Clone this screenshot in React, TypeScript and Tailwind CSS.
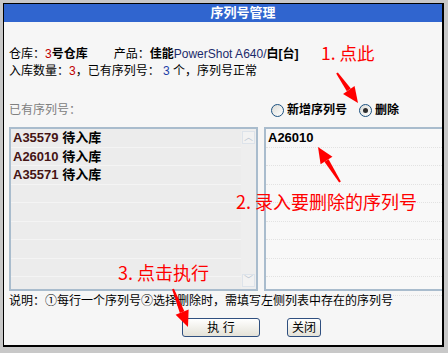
const font = "font-['Liberation_Sans','Noto_Sans_CJK_SC',sans-serif]";
const handFont = "font-['Noto_Sans_CJK_SC',sans-serif]";

const leftItems = ["A35579", "A26010", "A35571"];

const Radio = ({ checked, label }: { checked?: boolean; label: string }) => (
  <label className="flex items-center gap-[3px]">
    <span className="w-[13px] h-[13px] rounded-full border border-[#1c5180] bg-gradient-to-br from-[#dcdcd7] to-white flex items-center justify-center">
      {checked && <span className="w-[5px] h-[5px] rounded-full bg-[#2e2e2e]" />}
    </span>
    <span className="font-bold">{label}</span>
  </label>
);

const Arrow = ({ x1, y1, x2, y2 }: { x1: number; y1: number; x2: number; y2: number }) => {
  const dx = x2 - x1;
  const dy = y2 - y1;
  const len = Math.hypot(dx, dy);
  const ux = dx / len;
  const uy = dy / len;
  const hx = x2 - ux * 16;
  const hy = y2 - uy * 16;
  const px = -uy * 7;
  const py = ux * 7;
  return (
    <g>
      <polygon
        points={`${x1 - uy * 1},${y1 + ux * 1} ${x1 + uy * 1},${y1 - ux * 1} ${hx - px * 0.35},${hy - py * 0.35} ${hx + px * 0.35},${hy + py * 0.35}`}
        fill="#ff0000"
      />
      <polygon points={`${x2},${y2} ${hx + px},${hy + py} ${hx - px},${hy - py}`} fill="#ff0000" />
    </g>
  );
};

const App = () => {
  return (
    <div className={`relative w-[448px] h-[353px] bg-[#c8c8c8] pt-[3px] pl-[3px] text-[12px] text-black ${font}`}>
      <div className="w-[441px] h-[344px] border border-black border-r-2 border-b-2 bg-[#f6f6f6] overflow-hidden">
        {/* title */}
        <div className="h-[18px] bg-[#3065cf] text-white font-bold text-[13px] leading-[18px] text-center pl-[40px]">
          序列号管理
        </div>

        <div className="pl-[5px] pt-[24px]">
          <div className="leading-[17px] whitespace-nowrap">
            仓库：<span className="text-[#c00000]">3</span>
            <span className="font-bold">号仓库</span>
            <span className="inline-block w-[26px]" />
            产品：<span className="font-bold">佳能</span>
            <span className="text-[#1b2a6b]">PowerShot A640/</span>
            <span className="font-bold">白[台]</span>
          </div>
          <div className="leading-[17px] whitespace-nowrap">
            入库数量：<span className="text-[#c00000]">3</span>，已有序列号： <span className="text-[#1d3fa8]">3</span> 个，序列号正常
          </div>

          <div className="mt-[20px] h-[20px] flex items-center justify-between pr-[43px]">
            <span className="text-[#808080]">已有序列号：</span>
            <div className="flex items-center gap-[12px]">
              <Radio label="新增序列号" />
              <Radio checked label="删除" />
            </div>
          </div>

          <div className="mt-[7px] flex gap-[6px] h-[164px]">
            {/* left list */}
            <div className="w-[249px] shrink-0 border-2 border-[#a9bccd] bg-[#ececec] flex">
              <div className="flex-1">
                {Array.from({ length: 9 }).map((_, i) => (
                  <div key={i} className="h-[18.5px] border-b border-[#f4f4f4] pl-[2px] leading-[18px] text-[13px] font-bold">
                    {leftItems[i] && (
                      <>
                        <span className="text-[#451414]">{leftItems[i]}</span> 待入库
                      </>
                    )}
                  </div>
                ))}
              </div>
              <div className="w-[15px] bg-[#eeeeee] flex flex-col justify-between py-[2px]">
                <div className="h-[13px] mx-[1px] border border-[#dde3ea] bg-[#f2f2f2] text-[#b8c4d0] text-[9px] leading-[11px] text-center">
                  ︿
                </div>
                <div className="h-[13px] mx-[1px] border border-[#dde3ea] bg-[#f2f2f2] text-[#b8c4d0] text-[9px] leading-[11px] text-center">
                  ﹀
                </div>
              </div>
            </div>
            {/* right input */}
            <div className="w-[200px] shrink-0 border-2 border-[#a9bccd] bg-[#f8f8f8]">
              {Array.from({ length: 9 }).map((_, i) => (
                <div key={i} className="h-[18.5px] border-b border-dotted border-[#e2e2e2] pl-[2px] leading-[18px] text-[13px] font-bold">
                  {i === 0 ? "A26010" : ""}
                </div>
              ))}
            </div>
          </div>

          <div className="mt-[2px] leading-[17px] whitespace-nowrap">
            说明：①每行一个序列号②选择删除时，需填写左侧列表中存在的序列号
          </div>

          <div className="mt-[8px] flex pl-[173px] gap-[27px]">
            <button className="w-[78px] h-[19px] rounded-[3px] border border-[#2f4f7f] bg-gradient-to-b from-white to-[#e4e2d8] leading-[16px]">
              执 行
            </button>
            <button className="w-[34px] h-[19px] rounded-[3px] border border-[#2f4f7f] bg-gradient-to-b from-white to-[#e4e2d8] leading-[16px]">
              关闭
            </button>
          </div>
        </div>
      </div>

      {/* annotations */}
      <div className={`absolute left-[321px] top-[42px] text-[17.5px] leading-[22px] text-[#ff0000] ${handFont}`}>1. 点此</div>
      <div className={`absolute left-[236px] top-[190px] text-[18px] leading-[22px] text-[#ff0000] ${handFont}`}>2. 录入要删除的序列号</div>
      <div className={`absolute left-[118px] top-[261px] text-[18px] leading-[22px] text-[#ff0000] ${handFont}`}>3. 点击执行</div>
      <svg className="absolute left-0 top-0" width={448} height={353}>
        <Arrow x1={337} y1={73} x2={358} y2={103} />
        <Arrow x1={340} y1={182} x2={318} y2={147} />
        <Arrow x1={173} y1={289} x2={188} y2={327} />
      </svg>
    </div>
  );
};

export default App;
